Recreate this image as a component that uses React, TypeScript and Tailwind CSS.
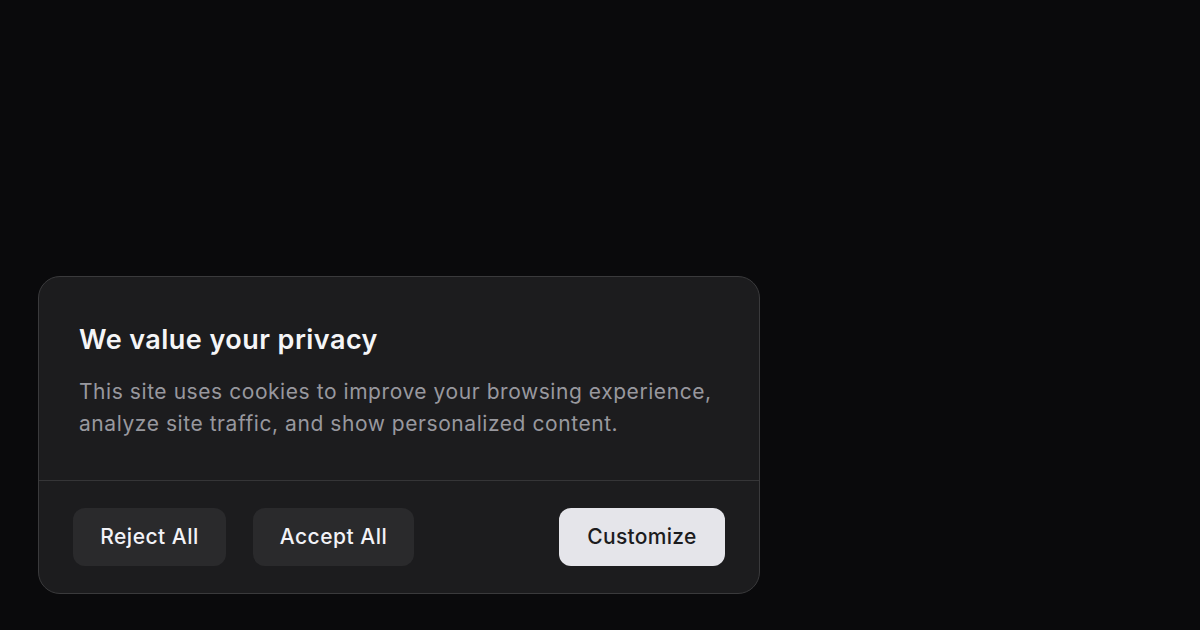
const buttons = [
  { label: "Reject All", width: "w-[153px]" },
  { label: "Accept All", width: "w-[161px]" },
]

export default function App() {
  return (
    <div
      className="w-[1200px] h-[630px] bg-[#0a0a0c] overflow-hidden pt-[276px] pl-[38px]"
      style={{ fontFamily: "Inter, 'Noto Sans', sans-serif" }}
    >
      {/* Cookie banner */}
      <div className="w-[722px] h-[318px] rounded-[22px] border border-[#3a3a3c] bg-[#1c1c1e] flex flex-col overflow-hidden">
        <div className="pl-[40px] pr-[30px] pt-[47px] pb-[40px] border-b border-[#353537]">
          <h2 className="text-[27px] leading-[32px] font-semibold text-[#f5f5f7] tracking-[0.45px]">
            We value your privacy
          </h2>
          <p className="mt-[20px] text-[21px] leading-[32px] text-[#98989e] tracking-[0.56px]">
            This site uses cookies to improve your browsing experience,
            <br />
            analyze site traffic, and show personalized content.
          </p>
        </div>
        <div className="flex items-center px-[34px] pt-[27px]">
          <div className="flex gap-[27px]">
            {buttons.map((b) => (
              <button
                key={b.label}
                className={`${b.width} h-[58px] rounded-[12px] bg-[#2a2a2c] text-[#f2f2f7] text-[21px] font-medium tracking-[0.5px]`}
              >
                {b.label}
              </button>
            ))}
          </div>
          <button className="ml-auto h-[58px] w-[166px] rounded-[12px] bg-[#e5e5ea] text-[#1c1c1e] text-[21px] font-medium tracking-[0.3px]">
            Customize
          </button>
        </div>
      </div>
    </div>
  )
}
